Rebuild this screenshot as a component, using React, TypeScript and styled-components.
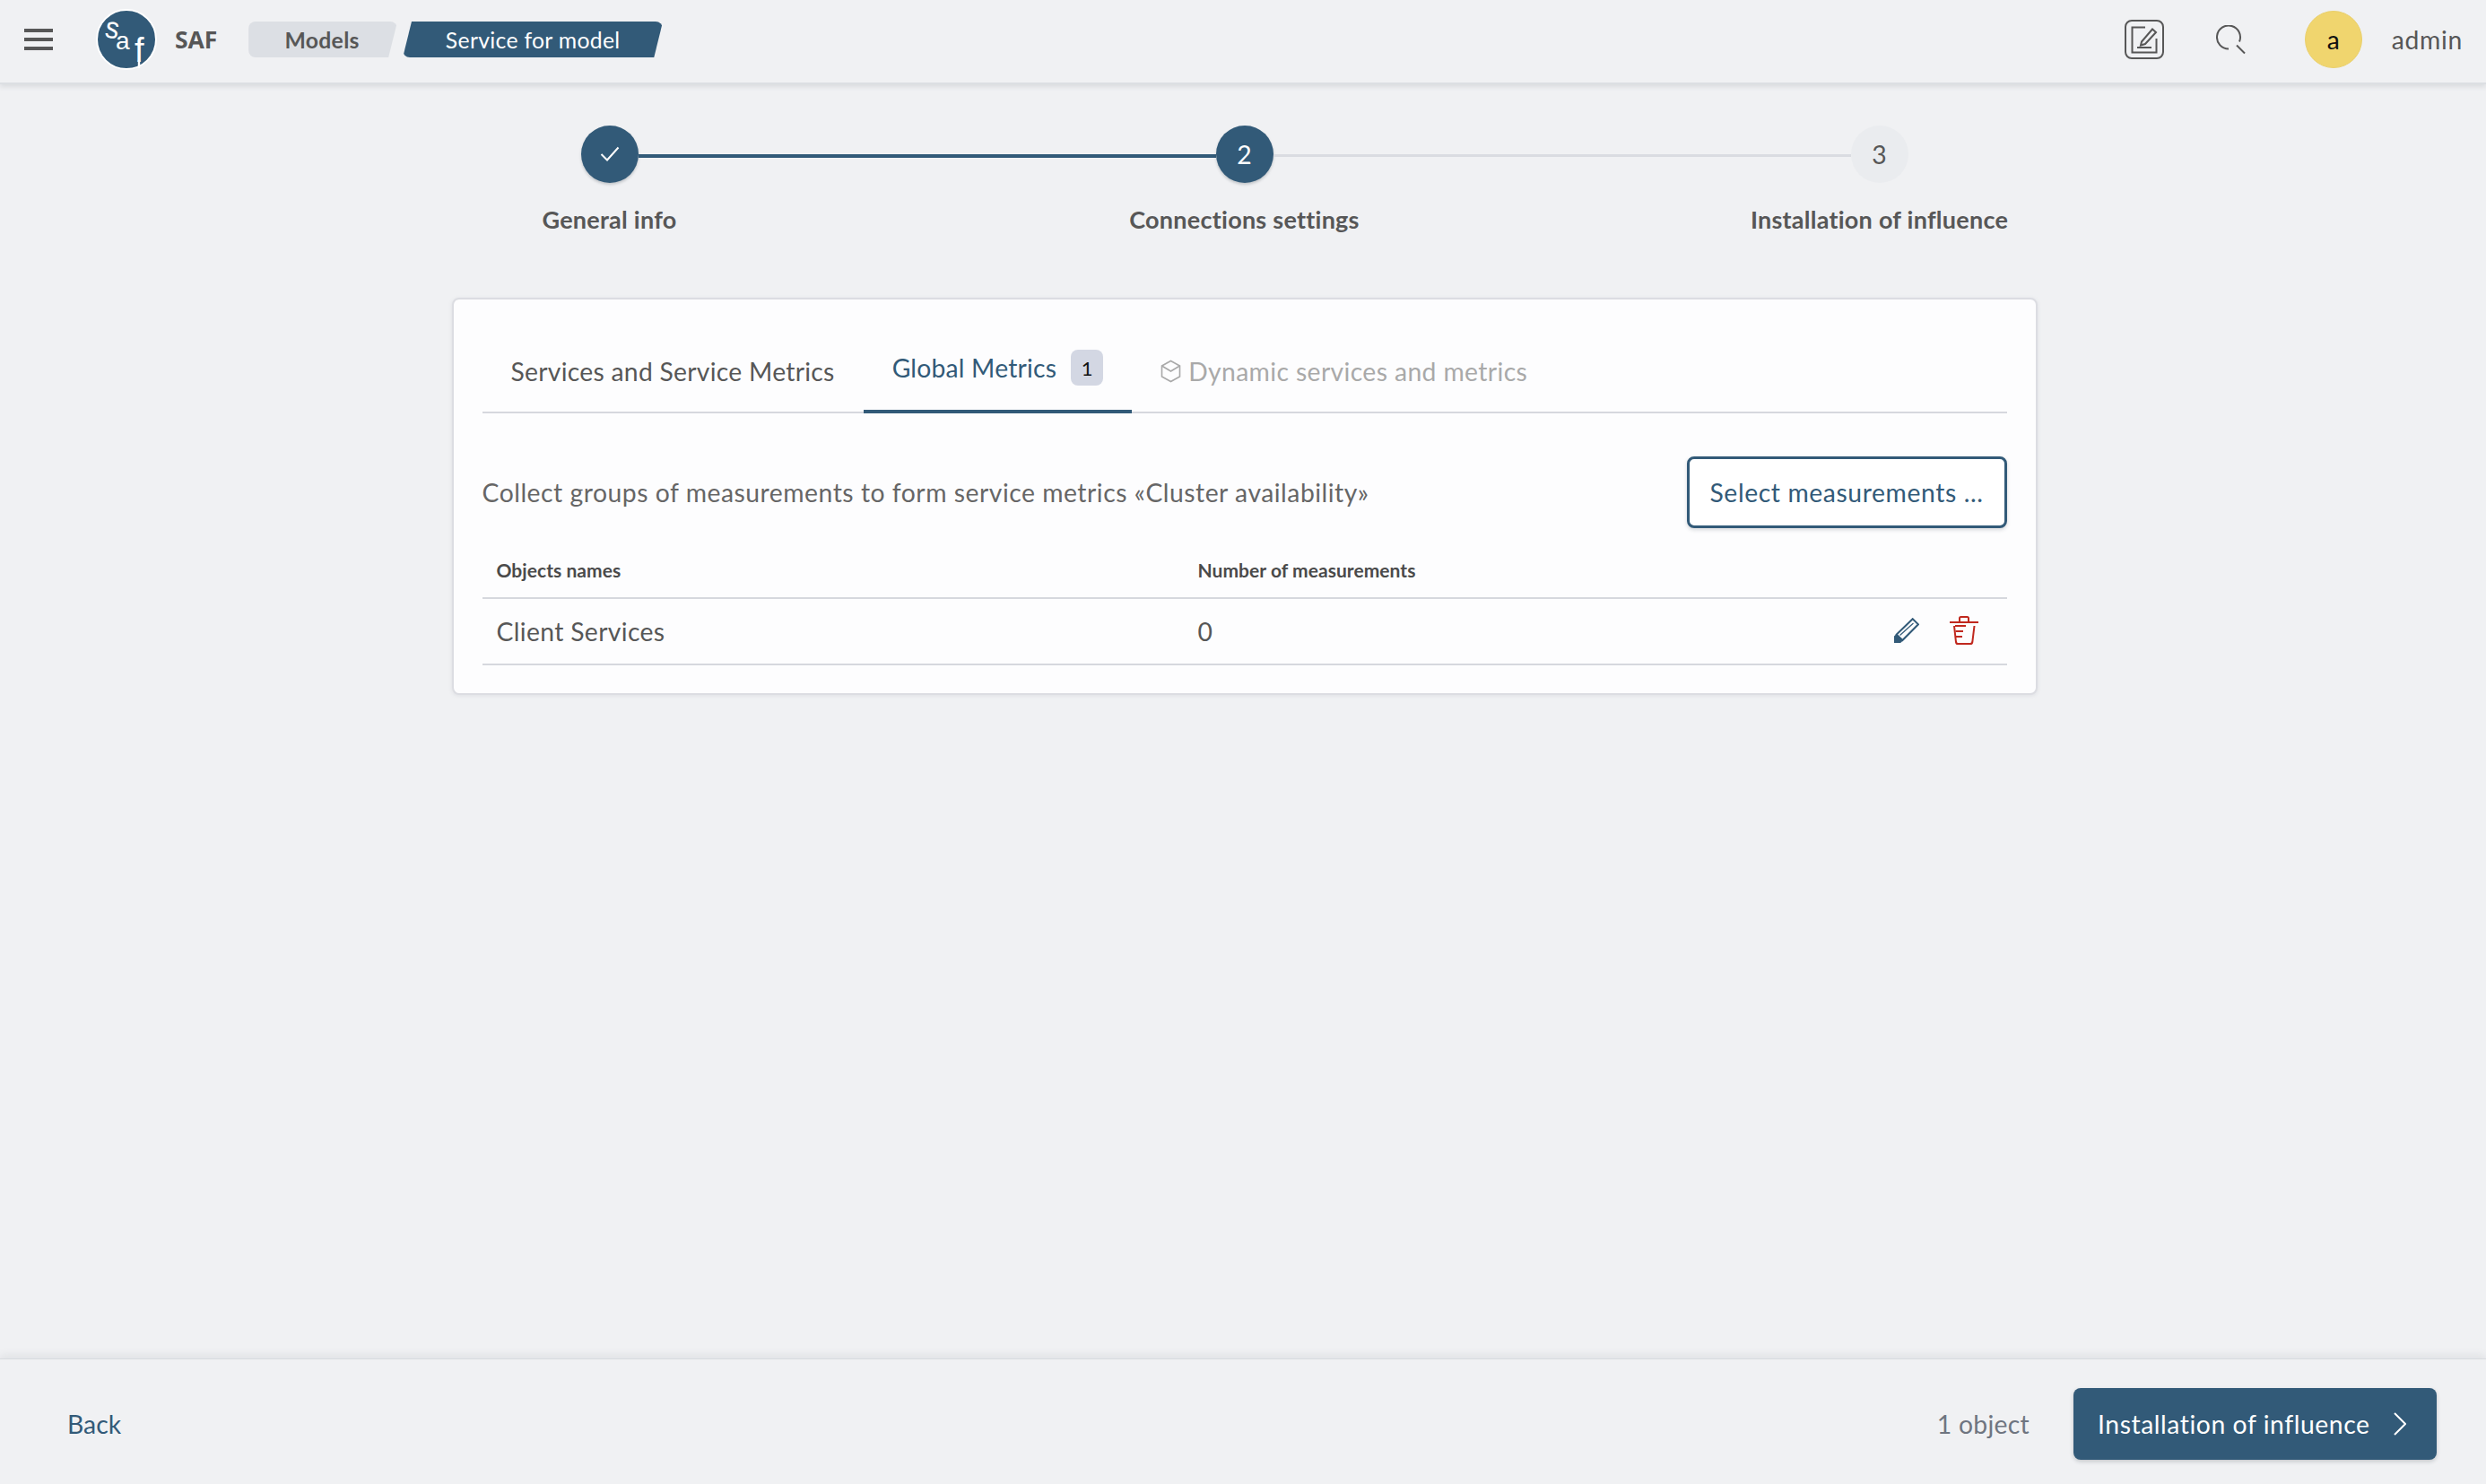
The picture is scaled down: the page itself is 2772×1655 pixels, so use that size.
import React from "react";
import styled, { createGlobalStyle } from "styled-components";

const ink = "#325a78";
const grey = "#575757";

const Global = createGlobalStyle`
  html, body { margin: 0; padding: 0; background: #f0f1f3; }
  * { box-sizing: border-box; }
  body { font-family: Lato, "Noto Sans", "Liberation Sans", sans-serif; font-size: 28.3px; color: ${grey}; }
`;

const Page = styled.div`
  display: flex;
  flex-direction: column;
  height: 1655px;
  overflow: hidden;
`;

const Header = styled.header`
  height: 94px;
  flex: none;
  display: flex;
  align-items: center;
  padding: 0 26px 4px 27px;
  border-bottom: 2px solid #dcdfe3;
  box-shadow: 0 3px 5px rgba(120, 130, 140, 0.18);
  position: relative;
  z-index: 1;
`;

const Burger = styled.div`
  width: 32px;
  display: flex;
  flex-direction: column;
  gap: 6px;
  margin-right: 48px;
  span { display: block; height: 4px; background: ${grey}; }
`;

const AppName = styled.span`
  font-family: "Open Sans", sans-serif;
  font-weight: 700;
  font-size: 26.5px;
  letter-spacing: -0.1px;
  margin-left: 20px;
  margin-right: 35px;
`;

const Crumbs = styled.nav`
  display: flex;
  gap: 6px;
`;

const Crumb = styled.span<{ $active?: boolean; $first?: boolean }>`
  position: relative;
  height: 40px;
  width: ${(p) => (p.$first ? "166px" : "290px")};
  display: flex;
  align-items: center;
  justify-content: center;
  font-size: 24.75px;
  letter-spacing: 0.3px;
  z-index: 0;
  color: ${(p) => (p.$active ? "#fff" : grey)};
  font-weight: ${(p) => (p.$active ? 400 : 700)};
  padding-right: ${(p) => (p.$first ? "2px" : "0")};
  &::before {
    content: "";
    position: absolute;
    inset: 0;
    z-index: -1;
    border-radius: 8px;
    background: ${(p) => (p.$active ? ink : "#dcdfe4")};
    clip-path: ${(p) =>
      p.$first
        ? "polygon(0 0, 100% 0, 94% 100%, 0 100%)"
        : "polygon(3.4% 0, 100% 0, 96.6% 100%, 0 100%)"};
  }
`;

const Spacer = styled.div`
  flex: 1;
`;

const HeaderIcon = styled.svg`
  display: block;
  flex: none;
`;

const Avatar = styled.div`
  width: 64px;
  height: 64px;
  border-radius: 50%;
  background: #f0d56e;
  border: 1px solid #ead06c;
  color: #111;
  display: flex;
  align-items: center;
  justify-content: center;
  margin-left: 66px;
  margin-right: 33px;
`;

const UserName = styled.span`
  letter-spacing: 0.7px;
`;

const Main = styled.main`
  flex: 1;
  min-height: 0;
  padding-left: 3px;
`;

const Stepper = styled.ol`
  list-style: none;
  margin: 46px auto 0;
  padding: 0;
  width: 2124px;
  display: grid;
  grid-template-columns: repeat(3, 1fr);
`;

const Step = styled.li`
  display: flex;
  flex-direction: column;
  align-items: center;
`;

const Track = styled.div`
  display: flex;
  width: 100%;
  height: 64px;
`;

const Rail = styled.div<{ $on?: boolean; $hidden?: boolean }>`
  flex: 1;
  height: ${(p) => (p.$on ? "4px" : "3px")};
  margin-top: 32px;
  background: ${(p) => (p.$hidden ? "transparent" : p.$on ? ink : "#dadce1")};
`;

const Bullet = styled.div<{ $on?: boolean }>`
  width: 64px;
  height: 64px;
  flex: none;
  border-radius: 50%;
  display: flex;
  align-items: center;
  justify-content: center;
  font-size: 28.3px;
  background: ${(p) => (p.$on ? ink : "#eaecef")};
  color: ${(p) => (p.$on ? "#fff" : grey)};
  box-shadow: ${(p) => (p.$on ? "0 2px 3px rgba(60,70,80,.25)" : "none")};
`;

const StepLabel = styled.div`
  margin-top: 23px;
  font-weight: 700;
  font-size: 27px;
  line-height: 36px;
  letter-spacing: 0.25px;
`;

const Card = styled.section`
  width: 1768px;
  height: 443px;
  margin: 69px auto 0;
  padding: 0 32px;
  background: #fdfdfe;
  border: 2px solid #dcdde2;
  border-radius: 8px;
  box-shadow: 0 1px 4px rgba(120, 130, 140, 0.15);
`;

const TabBar = styled.div`
  display: flex;
  height: 127px;
  border-bottom: 2px solid #d6d8de;
`;

const Tab = styled.div<{ $active?: boolean; $disabled?: boolean }>`
  display: flex;
  align-items: center;
  padding: ${(p) => (p.$active ? "29px 32px 0" : "42px 32px 10px")};
  height: 127px;
  margin-bottom: -2px;
  gap: ${(p) => (p.$disabled ? "8px" : "16px")};
  letter-spacing: ${(p) => (p.$active ? "0.2px" : p.$disabled ? "0.38px" : "0.27px")};
  color: ${(p) => (p.$active ? ink : p.$disabled ? "#a9a9a9" : grey)};
  border-bottom: ${(p) => (p.$active ? `4px solid ${ink}` : "none")};
`;

const Badge = styled.span`
  width: 36px;
  height: 40px;
  border-radius: 8px;
  background: #d3d7e3;
  color: #111;
  font-size: 22px;
  display: flex;
  align-items: center;
  justify-content: center;
`;

const Intro = styled.div`
  display: flex;
  align-items: center;
  justify-content: space-between;
  margin-top: 48px;
  color: #666;
  letter-spacing: 0.52px;
`;

const OutlineButton = styled.button`
  width: 357px;
  height: 80px;
  font: inherit;
  letter-spacing: 0.6px;
  color: ${ink};
  background: #fff;
  border: 3px solid ${ink};
  border-radius: 8px;
  box-shadow: 0 2px 4px rgba(60, 70, 80, 0.2);
  padding: 0;
`;

const Row = styled.div<{ $head?: boolean }>`
  display: grid;
  grid-template-columns: 782px 1fr auto;
  align-items: center;
  padding: 0 32px 0 16px;
  height: ${(p) => (p.$head ? "79px" : "74px")};
  border-bottom: 2px solid #d6d8de;
  letter-spacing: 0.35px;
  ${(p) => (p.$head ? "padding-top: 16px; font-weight: 700; font-size: 21px; color: #4a4a4a; letter-spacing: 0.05px;" : "")}
`;

const RowActions = styled.div`
  display: flex;
  align-items: center;
  gap: 34px;
  margin-top: -2px;
`;

const Footer = styled.footer`
  height: 140px;
  flex: none;
  display: flex;
  align-items: flex-start;
  justify-content: space-between;
  padding: 32px 55px 0 75px;
  border-top: 1px solid #d8dbdf;
  box-shadow: 0 -4px 8px rgba(120, 130, 140, 0.13);
`;

const BackLink = styled.a`
  color: ${ink};
  line-height: 80px;
`;

const FooterRight = styled.div`
  display: flex;
  align-items: center;
  gap: 49px;
`;

const Count = styled.span`
  color: #6f7580;
  letter-spacing: 0.3px;
`;

const NextButton = styled.button`
  width: 405px;
  height: 80px;
  border: 0;
  border-radius: 8px;
  font: inherit;
  letter-spacing: 0.57px;
  color: #fff;
  background: ${ink};
  box-shadow: 0 2px 4px rgba(60, 70, 80, 0.25);
  display: flex;
  align-items: center;
  justify-content: space-between;
  padding: 0 34px 0 27px;
`;

const LogoMark = styled.svg`
  display: block;
  flex: none;
`;

const Logo = () => (
  <LogoMark width="68" height="68" viewBox="0 0 68 68">
    <circle cx="34" cy="34" r="33" fill={ink} stroke="#fff" strokeWidth="2" />
    <g fill="#fff" fontFamily="'Liberation Sans', sans-serif">
      <text transform="translate(9 31) rotate(10) scale(0.95 1.05)" fontSize="32">s</text>
      <text x="22" y="45" fontSize="28">a</text>
      <text x="43" y="59" fontSize="38">f</text>
    </g>
    <path d="M48 57V66" stroke="#fff" strokeWidth="2.4" />
  </LogoMark>
);

const EditIcon = () => (
  <HeaderIcon width="44" height="44" viewBox="0 0 44 44" fill="none" stroke={grey} strokeWidth="2">
    <rect x="1" y="1" width="42" height="42" rx="7" />
    <path d="M23 8.5H8.5V36.5H35.5V21" />
    <path d="M14 31H30" />
    <path d="M19 24.5L31 10.5L35 14L23 27L18 28.5Z" />
  </HeaderIcon>
);

const SearchIconMark = styled(HeaderIcon)`
  margin-left: 58px;
`;

const SearchIcon = () => (
  <SearchIconMark width="33" height="33" viewBox="0 0 33 33" fill="none" stroke={grey} strokeWidth="2">
    <path d="M14 26.5A13 13 0 1 1 26 18.5" />
    <path d="M23 22.5L32 31.5" />
  </SearchIconMark>
);

const Check = () => (
  <svg width="22" height="18" viewBox="0 0 22 18" fill="none" stroke="#fff" strokeWidth="2">
    <path d="M1.5 9L8 15.5L20.5 1.5" />
  </svg>
);

const CubeIcon = () => (
  <svg width="23" height="26" viewBox="0 0 23 26" fill="none" stroke="#a9a9a9" strokeWidth="1.6">
    <path d="M11.5 1.5L21.5 7V19L11.5 24.5L1.5 19V7Z" />
    <path d="M1.5 7L11.5 13L21.5 7" />
  </svg>
);

const PencilIcon = () => (
  <svg width="28" height="28" viewBox="0 0 28 28" fill="none" stroke={ink} strokeWidth="2">
    <path d="M20.7 1.2L27 7.3L9.4 25L2.8 18.6Z" />
    <path d="M6.5 19.5L21.5 6" strokeWidth="1.2" />
    <path d="M0 28V20.5L2.6 18L9.8 25.4L7.2 28Z" fill={ink} stroke="none" />
  </svg>
);

const TrashIcon = () => (
  <svg width="32" height="32" viewBox="0 0 32 32" fill="none" stroke="#c0281e" strokeWidth="2">
    <path d="M0 7H32" />
    <path d="M11 7V2.5Q11 1 12.5 1H19.5Q21 1 21 2.5V7" />
    <path d="M5 11L7 29Q7.3 31 9 31H23Q25 31 25.3 29L27.5 11" />
    <path d="M6 11H18M6.5 17H15M7 23H14" />
  </svg>
);

const ChevronIcon = () => (
  <svg width="14" height="26" viewBox="0 0 14 26" fill="none" stroke="#fff" strokeWidth="2">
    <path d="M1 1L13 13L1 25" />
  </svg>
);

export default function App() {
  return (
    <Page>
      <Global />
      <Header>
        <Burger>
          <span />
          <span />
          <span />
        </Burger>
        <Logo />
        <AppName>SAF</AppName>
        <Crumbs>
          <Crumb $first>Models</Crumb>
          <Crumb $active>Service for model</Crumb>
        </Crumbs>
        <Spacer />
        <EditIcon />
        <SearchIcon />
        <Avatar>a</Avatar>
        <UserName>admin</UserName>
      </Header>
      <Main>
        <Stepper>
          <Step>
            <Track>
              <Rail $hidden />
              <Bullet $on>
                <Check />
              </Bullet>
              <Rail $on />
            </Track>
            <StepLabel>General info</StepLabel>
          </Step>
          <Step>
            <Track>
              <Rail $on />
              <Bullet $on>2</Bullet>
              <Rail />
            </Track>
            <StepLabel>Connections settings</StepLabel>
          </Step>
          <Step>
            <Track>
              <Rail />
              <Bullet>3</Bullet>
              <Rail $hidden />
            </Track>
            <StepLabel>Installation of influence</StepLabel>
          </Step>
        </Stepper>
        <Card>
          <TabBar>
            <Tab>Services and Service Metrics</Tab>
            <Tab $active>
              Global Metrics <Badge>1</Badge>
            </Tab>
            <Tab $disabled>
              <CubeIcon /> Dynamic services and metrics
            </Tab>
          </TabBar>
          <Intro>
            <span>Collect groups of measurements to form service metrics «Cluster availability»</span>
            <OutlineButton>Select measurements ...</OutlineButton>
          </Intro>
          <Row $head>
            <span>Objects names</span>
            <span>Number of measurements</span>
            <span />
          </Row>
          <Row>
            <span>Client Services</span>
            <span>0</span>
            <RowActions>
              <PencilIcon />
              <TrashIcon />
            </RowActions>
          </Row>
        </Card>
      </Main>
      <Footer>
        <BackLink>Back</BackLink>
        <FooterRight>
          <Count>1 object</Count>
          <NextButton>
            Installation of influence <ChevronIcon />
          </NextButton>
        </FooterRight>
      </Footer>
    </Page>
  );
}
